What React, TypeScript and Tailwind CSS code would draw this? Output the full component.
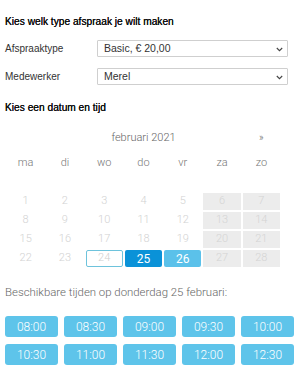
import React from "react";

const Chevron = () => (
  <svg width="7" height="5" viewBox="0 0 7 5" className="absolute right-[4px] top-[6px]">
    <path d="M0.8 1 L3.5 3.7 L6.2 1" fill="none" stroke="#444" strokeWidth="1.1" />
  </svg>
);

const Select = ({ value }: { value: string }) => (
  <div className="relative ml-auto w-[191px] h-[17px] border border-[#cfcfcf] bg-white rounded-[1px] pl-[6px] text-[10.5px] leading-[15px] text-[#333]">
    {value}
    <Chevron />
  </div>
);

export default function App() {
  const days = ["ma", "di", "wo", "do", "vr", "za", "zo"];
  const rows = [
    [1, 2, 3, 4, 5, 6, 7],
    [8, 9, 10, 11, 12, 13, 14],
    [15, 16, 17, 18, 19, 20, 21],
    [22, 23, 24, 25, 26, 27, 28],
  ];
  const times = ["08:00", "08:30", "09:00", "09:30", "10:00", "10:30", "11:00", "11:30", "12:00", "12:30"];
  return (
    <div className="w-[300px] h-[390px] bg-white px-[5px] pt-[15px] overflow-hidden" style={{ fontFamily: '"Liberation Sans", Arial, sans-serif' }}>
      <div className="h-[14px] leading-[14px] text-[10.2px] text-[#111] [text-shadow:0_0_0.4px_#000]">Kies welk type afspraak je wilt maken</div>
      <div className="mt-[11px] flex items-center pr-[7px]">
        <div className="text-[10px] text-[#333]">Afspraaktype</div>
        <Select value="Basic, € 20,00" />
      </div>
      <div className="mt-[11px] flex items-center pr-[7px]">
        <div className="text-[10px] text-[#333]">Medewerker</div>
        <Select value="Merel" />
      </div>
      <div className="mt-[16px] h-[14px] leading-[14px] text-[10.2px] text-[#111] [text-shadow:0_0_0.4px_#000]">Kies een datum en tijd</div>

      <div className="ml-[2px] w-[273px]" style={{ fontFamily: 'Roboto, "Liberation Sans", sans-serif' }}>
        <div className="mt-[16px] grid grid-cols-7 gap-x-[2px] h-[14px] leading-[14px] text-[11px] font-light text-[#666]">
          <div className="col-start-2 col-span-5 text-center">februari 2021</div>
          <div className="text-center text-[10px]">»</div>
        </div>
        <div className="mt-[11px] grid grid-cols-7 gap-x-[2px] h-[14px] leading-[14px] text-[11px] font-light text-[#777]">
          {days.map((d) => (
            <div key={d} className="text-center">{d}</div>
          ))}
        </div>
        <div className="mt-[23px] grid grid-cols-7 gap-[2px] text-[11px] font-light">
          {rows.flat().map((n, i) => {
            const col = i % 7;
            let cls = "text-[#d2d2d2]";
            if (col >= 5) cls = "bg-[#ececec] text-[#d4d4d4]";
            if (n === 24) cls = "border border-[#6ec3dc] text-[#cfcfcf] rounded-[2px]";
            if (n === 25) cls = "bg-[#0a92d8] text-white font-normal text-[12px] rounded-[2px]";
            if (n === 26) cls = "bg-[#5bc1ea] text-white font-normal text-[12px] rounded-[2px]";
            return (
              <div key={n} className={`h-[17px] flex items-center justify-center ${cls}`}>{n}</div>
            );
          })}
        </div>
      </div>

      <div className="mt-[18px] h-[14px] leading-[14px] text-[11.4px] font-light text-[#666]" style={{ fontFamily: 'Roboto, "Liberation Sans", sans-serif' }}>
        Beschikbare tijden op donderdag 25 februari:
      </div>
      <div className="mt-[17px] w-[289px] grid grid-cols-5 gap-x-[6px] gap-y-[7px]" style={{ fontFamily: 'Roboto, "Liberation Sans", sans-serif' }}>
        {times.map((t) => (
          <div key={t} className="h-[21px] rounded-[3px] bg-[#5ec4ea] text-white text-[12px] font-light flex items-center justify-center">{t}</div>
        ))}
      </div>
    </div>
  );
}
